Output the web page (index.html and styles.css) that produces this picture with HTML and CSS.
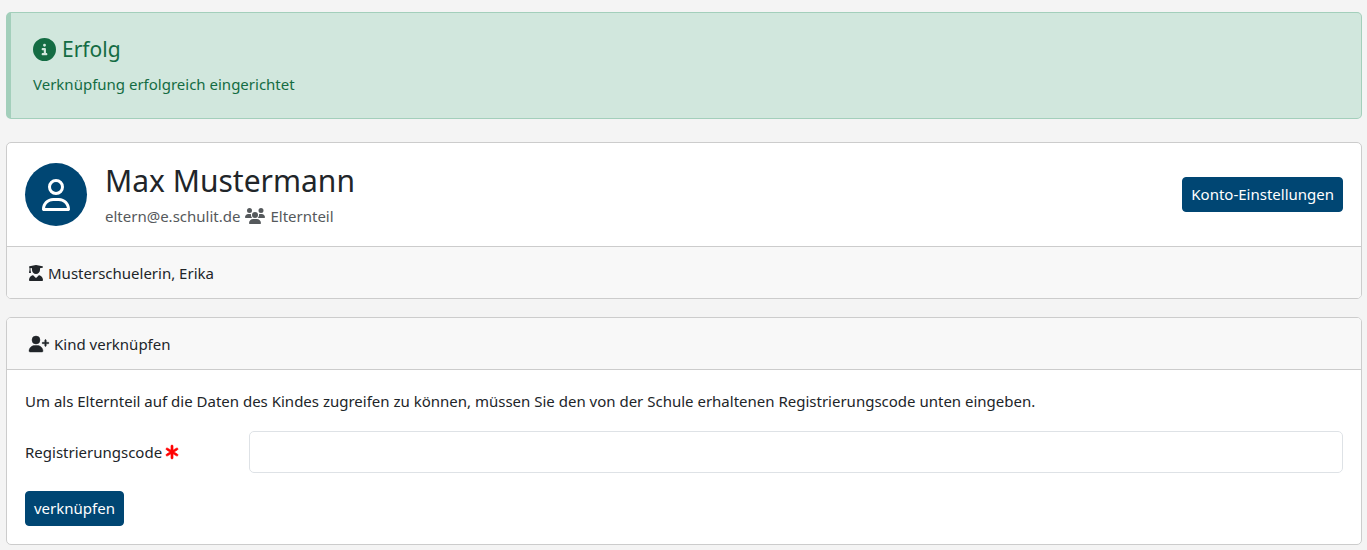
FILE: index.html
```
<!DOCTYPE html>
<html lang="de">
<head>
<meta charset="utf-8">
<meta name="viewport" content="width=device-width, initial-scale=1">
<title>Max Mustermann</title>
<link rel="stylesheet" href="styles.css">
</head>
<body>
<main class="page">
  <section class="alert" role="status">
    <h2 class="alert-title">
      <svg class="icon-info" viewBox="0 0 512 512" aria-hidden="true"><path d="M256 512A256 256 0 1 0 256 0a256 256 0 1 0 0 512zM216 336h24V272H216c-13.3 0-24-10.7-24-24s10.7-24 24-24h48c13.3 0 24 10.7 24 24v88h8c13.3 0 24 10.7 24 24s-10.7 24-24 24H216c-13.3 0-24-10.7-24-24s10.7-24 24-24zm40-208a32 32 0 1 1 0 64 32 32 0 1 1 0-64z"/></svg>
      Erfolg
    </h2>
    <p class="alert-text">Verknüpfung erfolgreich eingerichtet</p>
  </section>

  <section class="card">
    <div class="profile">
      <span class="avatar">
        <svg class="icon-avatar" viewBox="0 0 448 512" aria-hidden="true"><path d="M304 128a80 80 0 1 0 -160 0 80 80 0 1 0 160 0zM96 128a128 128 0 1 1 256 0A128 128 0 1 1 96 128zM49.3 464H398.7c-8.9-63.3-63.3-112-129-112H178.3c-65.7 0-120.1 48.7-129 112zM0 482.3C0 383.8 79.8 304 178.3 304h91.4C368.2 304 448 383.8 448 482.3c0 16.4-13.3 29.7-29.7 29.7H29.7C13.3 512 0 498.7 0 482.3z"/></svg>
      </span>
      <div class="identity">
        <h1 class="name">Max Mustermann</h1>
        <p class="meta">
          <span>eltern@e.schulit.de</span>
          <svg class="icon-wide" viewBox="0 0 640 512" aria-hidden="true"><path d="M144 0a80 80 0 1 1 0 160A80 80 0 1 1 144 0zM512 0a80 80 0 1 1 0 160A80 80 0 1 1 512 0zM0 298.7C0 239.8 47.8 192 106.7 192h42.7c15.9 0 31 3.5 44.6 9.7c-1.3 7.2-1.9 14.7-1.9 22.3c0 38.2 16.8 72.5 43.3 96c-.2 0-.4 0-.7 0H21.3C9.6 320 0 310.4 0 298.7zM405.3 320c-.2 0-.4 0-.7 0c26.6-23.5 43.3-57.8 43.3-96c0-7.6-.7-15-1.9-22.3c13.6-6.3 28.7-9.7 44.6-9.7h42.7C592.2 192 640 239.8 640 298.7c0 11.8-9.6 21.3-21.3 21.3H405.3zM224 224a96 96 0 1 1 192 0 96 96 0 1 1 -192 0zM128 485.3C128 411.7 187.7 352 261.3 352H378.7C452.3 352 512 411.7 512 485.3c0 14.7-11.9 26.7-26.7 26.7H154.7c-14.7 0-26.7-11.9-26.7-26.7z"/></svg>
          <span>Elternteil</span>
        </p>
      </div>
      <button class="button" type="button">Konto-Einstellungen</button>
    </div>
    <div class="band band-footer">
      <svg class="icon" viewBox="0 0 448 512" aria-hidden="true"><path d="M219.3 .5c3.1-.6 6.3-.6 9.4 0l200 40C439.9 42.7 448 52.6 448 64s-8.1 21.3-19.3 23.5L352 102.9V160c0 70.7-57.3 128-128 128s-128-57.3-128-128V102.9L48 93.3v65.1l15.7 78.4c.9 4.7-.3 9.6-3.3 13.3s-7.6 5.9-12.4 5.9H16c-4.8 0-9.3-2.1-12.4-5.9s-4.3-8.6-3.3-13.3L16 158.4V86.6C6.5 83.3 0 74.3 0 64C0 52.6 8.1 42.7 19.3 40.5l200-40zM111.9 327.7c10.5-3.4 21.8 .4 29.4 8.5l71 75.5c6.3 6.7 17 6.7 23.3 0l71-75.5c7.6-8.1 18.9-11.9 29.4-8.5C401 348.6 448 409.4 448 481.3c0 17-13.8 30.7-30.7 30.7H30.7C13.8 512 0 498.2 0 481.3c0-71.9 47-132.7 111.9-153.6z"/></svg>
      <span>Musterschuelerin, Erika</span>
    </div>
  </section>

  <section class="card">
    <div class="band band-header">
      <svg class="icon-wide" viewBox="0 0 640 512" aria-hidden="true"><path stroke="currentColor" stroke-width="14" d="M96 128a128 128 0 1 1 256 0A128 128 0 1 1 96 128zM0 482.3C0 383.8 79.8 304 178.3 304h91.4C368.2 304 448 383.8 448 482.3c0 16.4-13.3 29.7-29.7 29.7H29.7C13.3 512 0 498.7 0 482.3zM504 312V248H440c-13.3 0-24-10.7-24-24s10.7-24 24-24h64V136c0-13.3 10.7-24 24-24s24 10.7 24 24v64h64c13.3 0 24 10.7 24 24s-10.7 24-24 24H552v64c0 13.3-10.7 24-24 24s-24-10.7-24-24z"/></svg>
      <span>Kind verknüpfen</span>
    </div>
    <form class="form">
      <p class="hint">Um als Elternteil auf die Daten des Kindes zugreifen zu können, müssen Sie den von der Schule erhaltenen Registrierungscode unten eingeben.</p>
      <div class="field">
        <label class="label" for="code">Registrierungscode
          <svg class="icon-required" viewBox="0 0 384 512" aria-hidden="true"><path stroke="currentColor" stroke-width="22" d="M192 32c17.7 0 32 14.3 32 32V199.5l111.5-66.9c15.2-9.1 34.8-4.2 43.9 11s4.2 34.8-11 43.9L254.2 256l114.3 68.6c15.2 9.1 20.1 28.7 11 43.9s-28.7 20.1-43.9 11L224 312.5V448c0 17.7-14.3 32-32 32s-32-14.3-32-32V312.5L48.5 379.4c-15.2 9.1-34.8 4.2-43.9-11s-4.2-34.8 11-43.9L129.8 256 15.5 187.4c-15.2-9.1-20.1-28.7-11-43.9s28.7-20.1 43.9-11L160 199.5V64c0-17.7 14.3-32 32-32z"/></svg>
        </label>
        <input class="input" id="code" name="code" type="text" required>
      </div>
      <button class="button" type="submit">verknüpfen</button>
    </form>
  </section>
</main>
</body>
</html>
```
FILE: styles.css
```
* {
  box-sizing: border-box;
}

body {
  margin: 0;
  background: #f4f4f4;
  color: #212529;
  font-family: "Segoe UI", "Noto Sans", sans-serif;
  font-size: 15px;
  line-height: 24px;
}

h1, h2, p {
  margin: 0;
  font-weight: 400;
}

svg {
  display: block;
  flex: none;
  overflow: visible;
  fill: currentColor;
}

.page {
  padding: 12px 5px 5px 6px;
}

.alert {
  margin-bottom: 23px;
  padding: 21px 22px 22px;
  border: 1px solid #a3cfbb;
  border-left-width: 5px;
  border-radius: 5px;
  background: #d1e7dd;
  color: #146c43;
}

.alert-title {
  display: flex;
  align-items: center;
  gap: 6px;
  margin-bottom: 8px;
  font-size: 21px;
  line-height: 30px;
}

.icon-info {
  width: 23px;
  height: 23px;
}

.card {
  overflow: hidden;
  border: 1px solid #cccccc;
  border-radius: 5px;
  background: #ffffff;
}

.card + .card {
  margin-top: 18px;
}

.profile {
  display: flex;
  align-items: center;
  gap: 18px;
  padding: 18px;
}

.avatar {
  display: flex;
  align-items: center;
  justify-content: center;
  width: 62px;
  height: 63px;
  border-radius: 50%;
  background: #004673;
  color: #ffffff;
}

.icon-avatar {
  width: 28px;
  height: 32px;
}

.identity {
  flex: 1;
}

.name {
  margin-bottom: 3px;
  font-size: 30px;
  line-height: 40px;
}

.meta {
  display: flex;
  align-items: center;
  gap: 5px;
  color: #55595c;
}

.button {
  padding: 5px 8px;
  border: 1px solid #004673;
  border-radius: 4px;
  background: #004673;
  color: #ffffff;
  font: inherit;
  line-height: 23px;
  cursor: pointer;
}

.band {
  display: flex;
  align-items: center;
  gap: 5px;
  padding: 14px 22px 13px;
  background: #f8f8f8;
}

.band-footer {
  border-top: 1px solid #cccccc;
}

.band-header {
  border-bottom: 1px solid #cccccc;
}

.icon {
  width: 14px;
  height: 16px;
}

.icon-wide {
  width: 20px;
  height: 16px;
}

.form {
  padding: 19px 18px 18px;
}

.hint {
  margin-bottom: 18px;
}

.field {
  display: grid;
  grid-template-columns: 1fr 5fr;
  align-items: center;
  gap: 5px;
  margin-bottom: 18px;
}

.label {
  display: flex;
  align-items: center;
  gap: 4px;
}

.icon-required {
  width: 12px;
  height: 16px;
  color: #ff0000;
}

.input {
  width: 100%;
  height: 42px;
  padding: 8px 12px;
  border: 1px solid #dee2e6;
  border-radius: 5px;
  background: #ffffff;
  color: inherit;
  font: inherit;
}
```
